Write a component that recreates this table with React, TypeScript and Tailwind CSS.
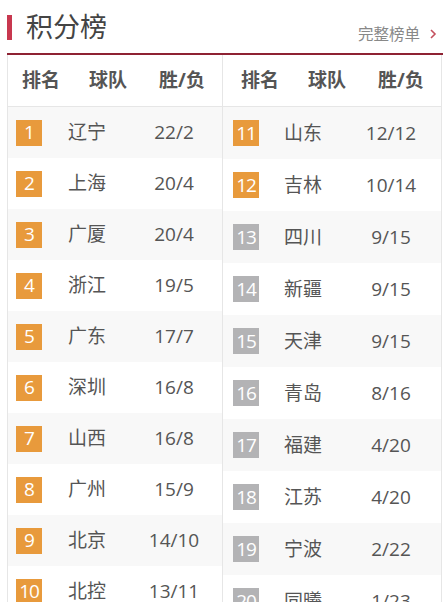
import React from "react";

type Row = { rank: number; team: string; score: string };

const left: Row[] = [
  { rank: 1, team: "辽宁", score: "22/2" },
  { rank: 2, team: "上海", score: "20/4" },
  { rank: 3, team: "广厦", score: "20/4" },
  { rank: 4, team: "浙江", score: "19/5" },
  { rank: 5, team: "广东", score: "17/7" },
  { rank: 6, team: "深圳", score: "16/8" },
  { rank: 7, team: "山西", score: "16/8" },
  { rank: 8, team: "广州", score: "15/9" },
  { rank: 9, team: "北京", score: "14/10" },
  { rank: 10, team: "北控", score: "13/11" },
];

const right: Row[] = [
  { rank: 11, team: "山东", score: "12/12" },
  { rank: 12, team: "吉林", score: "10/14" },
  { rank: 13, team: "四川", score: "9/15" },
  { rank: 14, team: "新疆", score: "9/15" },
  { rank: 15, team: "天津", score: "9/15" },
  { rank: 16, team: "青岛", score: "8/16" },
  { rank: 17, team: "福建", score: "4/20" },
  { rank: 18, team: "江苏", score: "4/20" },
  { rank: 19, team: "宁波", score: "2/22" },
  { rank: 20, team: "同曦", score: "1/23" },
];

const font = { fontFamily: '"Open Sans", "Noto Sans CJK SC", sans-serif' };

function Badge({ rank }: { rank: number }) {
  return (
    <div
      className={
        "w-[26px] h-[26px] flex items-center justify-center text-white text-[19px] leading-none tracking-[-1px] " +
        (rank <= 12 ? "bg-[#e89a3c]" : "bg-[#b3b3b5]")
      }
    >
      {rank}
    </div>
  );
}

function Table({ rows, side }: { rows: Row[]; side: "l" | "r" }) {
  const isL = side === "l";
  return (
    <div className={isL ? "w-[216px] border-l border-r border-[#e6e6e6]" : "w-[219px] border-r border-[#e6e6e6]"}>
      <div className={"h-[52px] flex items-center border-b border-[#e6e6e6] text-[19px] font-bold text-[#555] " + (isL ? "" : "pl-[4px]")}>
        <div className="w-[66px] text-center">排名</div>
        <div className="w-[68px] text-center">球队</div>
        <div className="w-[80px] text-center">胜/负</div>
      </div>
      {rows.map((r, i) => (
        <div
          key={r.rank}
          className={
            (isL ? "h-[51px] pl-[8px]" : "h-[52px] pl-[10px]") +
            " flex items-center " +
            (i % 2 === 0 ? "bg-[#f8f8f8]" : "bg-white")
          }
        >
          <Badge rank={r.rank} />
          <div className={"w-[40px] text-[19px] text-[#555] leading-none " + (isL ? "ml-[26px]" : "ml-[25px]")}>{r.team}</div>
          <div className={"w-[80px] text-center text-[19px] text-[#555] leading-none " + (isL ? "ml-[26px]" : "ml-[27px]")}>{r.score}</div>
        </div>
      ))}
    </div>
  );
}

export default function App() {
  return (
    <div className="w-[446px] h-[602px] overflow-hidden bg-white" style={font}>
      <div className="h-[53px] flex items-start pl-[7px] pr-[9px]">
        <div className="w-[5px] h-[25px] mt-[15px] bg-[#c8384f]" />
        <div className="ml-[14px] mt-[13px] text-[27px] leading-[27px] text-[#444]">积分榜</div>
        <div className="ml-auto mt-[26px] flex items-center text-[15.5px] leading-[16px] text-[#888]">
          完整榜单
          <svg width="8" height="12" viewBox="0 0 8 12" className="ml-[9px]">
            <path d="M2 2 L6 6 L2 10" fill="none" stroke="#c4505e" strokeWidth="1.6" />
          </svg>
        </div>
      </div>
      <div className="ml-[7px] w-[436px] h-[2px] bg-[#8e2233]" />
      <div className="ml-[7px] flex">
        <Table rows={left} side="l" />
        <Table rows={right} side="r" />
      </div>
    </div>
  );
}
